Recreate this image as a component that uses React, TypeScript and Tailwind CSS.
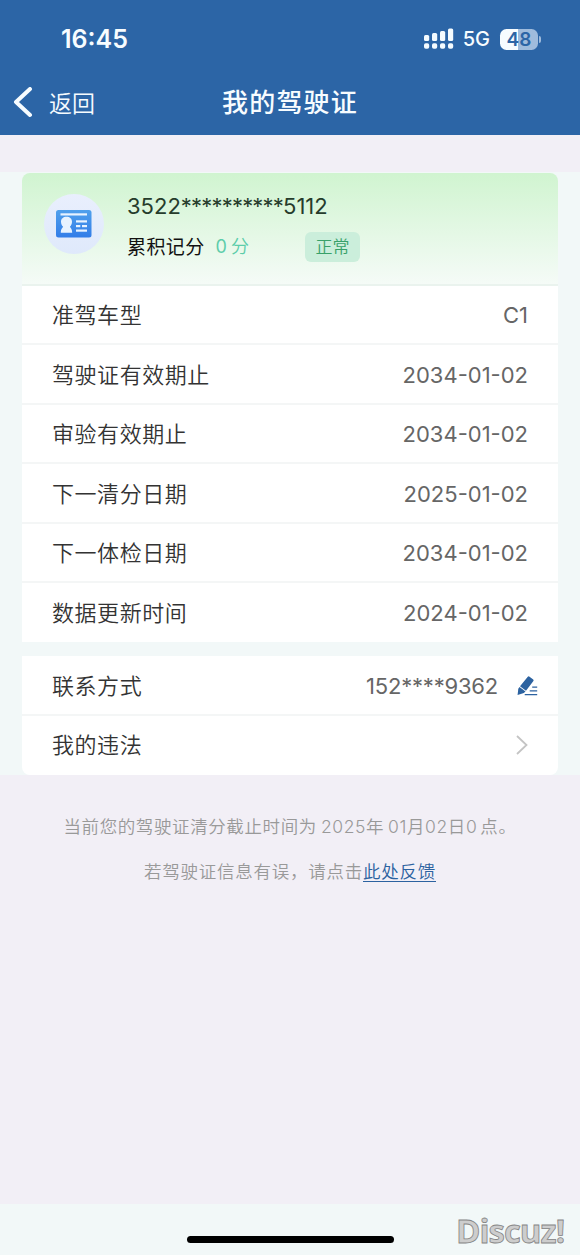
import type { ReactNode } from 'react'

const licenseRows = [
  { label: '准驾车型', value: 'C1' },
  { label: '驾驶证有效期止', value: '2034-01-02' },
  { label: '审验有效期止', value: '2034-01-02' },
  { label: '下一清分日期', value: '2025-01-02' },
  { label: '下一体检日期', value: '2034-01-02' },
  { label: '数据更新时间', value: '2024-01-02' },
]

const signalBars = [6, 8, 10, 12.5]

function SignalIcon() {
  return (
    <svg width="30" height="22" viewBox="0 0 30 22" fill="#f4fbff">
      {signalBars.map((h, i) => (
        <g key={h}>
          <rect x={i * 8} y={13 - h} width="5.2" height={h} rx="1.5" />
          <rect x={i * 8} y="15.2" width="5.2" height="5.6" rx="1.8" />
        </g>
      ))}
    </svg>
  )
}

function Battery() {
  return (
    <div className="flex items-center">
      <div className="flex h-[21px] w-[38px] items-center justify-center rounded-[6.5px] bg-linear-to-r from-[#f7fcff] from-48% to-[#9fbbdc] to-48% text-[19px] leading-none font-semibold text-[#2c65a6]">
        48
      </div>
      <div className="ml-px h-[7px] w-[2px] rounded-r-full bg-[#9fbbdc]" />
    </div>
  )
}

function LicenseIcon() {
  return (
    <svg width="36" height="28" viewBox="0 0 36 28">
      <defs>
        <linearGradient id="license" x1="0" y1="0" x2="0" y2="1">
          <stop offset="0" stopColor="#50a0ec" />
          <stop offset="1" stopColor="#327de8" />
        </linearGradient>
      </defs>
      <rect width="35.5" height="27.5" rx="2.5" fill="url(#license)" />
      <g fill="#e8f3ff">
        <rect x="4.5" y="3.3" width="26.5" height="2.2" />
        <path d="M10.5 6.8c3.300 0 5.500 2 5.500 5 0 2.300-.8 3.700-2 4.800.1 1.600 2.200 1.600 2.200 6.200H4.800c0-4.600 2.100-4.600 2.200-6.200-1.200-1.100-2-2.500-2-4.800 0-3 2.200-5 5.500-5z" />
        <rect x="20" y="10.300" width="11" height="2.200" />
        <rect x="20" y="15" width="4.300" height="2.200" />
        <rect x="26" y="15" width="5" height="2.200" />
        <rect x="20" y="19.500" width="11" height="2.200" />
      </g>
    </svg>
  )
}

function EditIcon() {
  return (
    <svg width="21" height="20" viewBox="0 0 21 20" fill="#2c62a0">
      <path d="M10.800.8a1 1 0 0 1 1.400-.2l4 2.900a1 1 0 0 1 .2 1.400L9 14.700 3 10.300z" />
      <path d="M2.500 11l6 4.400-1.600 1.500L.6 19l.7-6.300z" />
      <path d="M15.200 11.100h5M12.700 14.800h7.500M7.700 18.700h12.500" stroke="#2c62a0" strokeWidth="1.200" />
    </svg>
  )
}

function Row({ label, last, children }: { label: string; last?: boolean; children: ReactNode }) {
  return (
    <div
      className={`flex h-[59.4px] items-center justify-between bg-white px-[30px] ${
        last ? '' : 'border-b-2 border-[#f4f6f6] pt-[1.5px]'
      }`}
    >
      <span className="text-[22px] font-[350] tracking-[0.55px] text-[#333]">{label}</span>
      {children}
    </div>
  )
}

export default function App() {
  return (
    <div className="flex h-[1255px] w-[580px] flex-col overflow-hidden bg-[#f2eff6] font-[Inter,'Noto_Sans_CJK_SC',sans-serif] leading-none">
      {/* Status bar and title */}
      <header className="h-[135px] bg-[#2c65a6] text-[#f7fcff]">
        <div className="flex h-[78px] items-center justify-between pr-[39px] pl-[61px]">
          <span className="text-[25px] font-semibold">16:45</span>
          <div className="flex items-center">
            <SignalIcon />
            <span className="mr-[10px] ml-[9px] text-[20px] font-medium">5G</span>
            <Battery />
          </div>
        </div>
        <div className="grid h-[50px] grid-cols-[200px_180px_200px] items-center">
          <div className="flex items-center pl-[13px]">
            <svg width="20" height="32" viewBox="0 0 20 32" fill="none" stroke="currentColor" strokeWidth="4" strokeLinecap="round" strokeLinejoin="round">
              <path d="M17 2L3 15l14 13" />
            </svg>
            <span className="ml-4 pt-[2px] text-[23px] font-[350]">返回</span>
          </div>
          <h1 className="text-center text-[26px] font-medium tracking-[1.2px]">我的驾驶证</h1>
        </div>
      </header>

      <main className="mt-[37px] bg-[#f2f8f8] px-[22px] pt-px">
        {/* License card */}
        <section className="overflow-hidden rounded-t-lg">
          <div className="flex h-[113px] items-start border-b-2 border-[#eaf3ee] bg-linear-to-b from-[#d0f4d0] to-[#f5fbf7] pl-[22px]">
            <div className="mt-[21px] flex size-[60px] items-center justify-center rounded-full bg-linear-to-b from-[#e9effd] to-[#dfe9fb]">
              <LicenseIcon />
            </div>
            <div className="ml-[23px] pt-[22px]">
              <div className="text-[22px] text-[#263c2c]">
                3522<span className="tracking-[-0.8px]">**********</span>5112
              </div>
              <div className="mt-[15px] flex h-[30px] items-center text-[19px]">
                <span className="tracking-[0.4px] text-[#111]">累积记分</span>
                <span className="ml-[11px] flex gap-1 text-[18px] text-[#5dcdaa]">
                  <span>0</span>
                  <span className="font-[350]">分</span>
                </span>
                <span className="ml-[56px] flex h-[30px] w-[55px] items-center justify-center rounded-md bg-[#cbeedb] text-[17px] font-[350] text-[#38a169]">
                  正常
                </span>
              </div>
            </div>
          </div>
          {licenseRows.map((row, i) => (
            <Row key={row.label} label={row.label} last={i === licenseRows.length - 1}>
              <span className="text-[22px] text-[#666]">{row.value}</span>
            </Row>
          ))}
        </section>

        {/* Contact and violations */}
        <section className="mt-[14px] overflow-hidden rounded-b-lg">
          <Row label="联系方式">
            <div className="-mr-[10px] flex items-center gap-[19px]">
              <span className="text-[22px] tracking-[-0.2px] text-[#666]">152****9362</span>
              <EditIcon />
            </div>
          </Row>
          <Row label="我的违法" last>
            <svg width="12" height="20" viewBox="0 0 12 20" fill="none" stroke="#c4c4c4" strokeWidth="1.800">
              <path d="M1 1l9.500 9L1 19" />
            </svg>
          </Row>
        </section>
      </main>

      <div className="flex flex-1 flex-col items-center pt-[43px] text-[17.500px] font-[350] text-[#999]">
        <p className="flex tracking-[0.6px]">
          <span>当前您的驾驶证清分截止时间为</span>
          <span className="ml-1">2025年</span>
          <span className="ml-1">01月02日0</span>
          <span className="ml-[3px]">点。</span>
        </p>
        <p className="mt-[27px] tracking-[0.750px]">
          若驾驶证信息有误，请点击
          <a href="#" className="text-[#2c62a0] underline underline-offset-[3px]">
            此处反馈
          </a>
        </p>
      </div>

      {/* Home indicator */}
      <footer className="relative flex h-[51px] justify-center bg-[#f2f8f8]">
        <div className="mt-8 h-[7px] w-[207px] rounded-full bg-black" />
        <span className="absolute top-[10px] left-[456px] font-['Open_Sans'] text-[33px] leading-none font-bold tracking-[-1px] text-[#cdcdcd] [-webkit-text-stroke:0.8px_#858585]">
          Discuz!
        </span>
      </footer>
    </div>
  )
}
